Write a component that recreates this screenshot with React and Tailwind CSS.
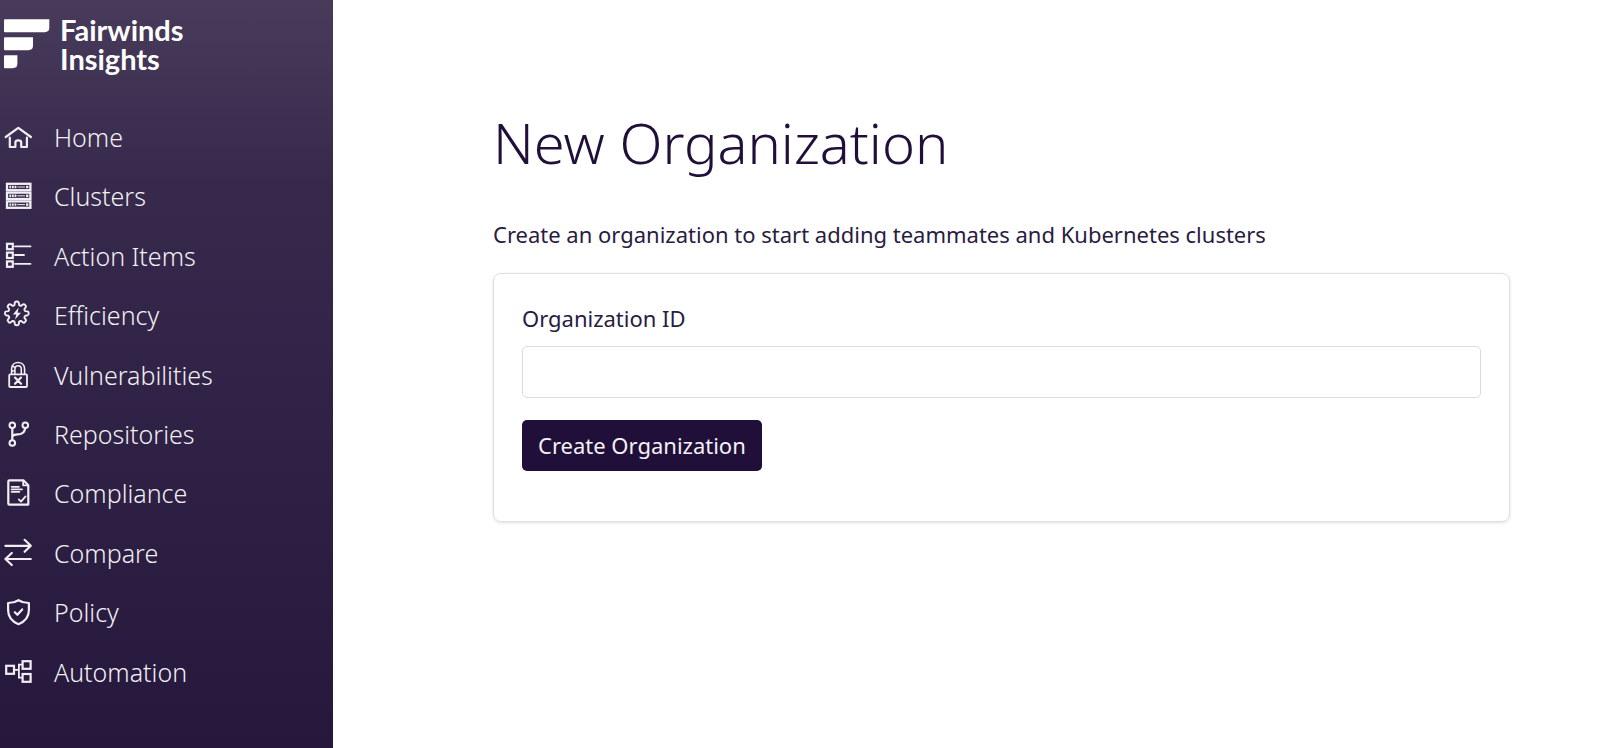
import React from "react";

const stroke = {
  fill: "none",
  stroke: "currentColor",
  strokeWidth: 2.2,
  strokeLinecap: "round",
  strokeLinejoin: "round",
};

function Icon({ children }) {
  return (
    <svg
      viewBox="0 0 28 28"
      className="h-7 w-7 shrink-0 overflow-visible"
      aria-hidden="true"
      {...stroke}
    >
      {children}
    </svg>
  );
}

function HomeIcon() {
  return (
    <Icon>
      <path d="M1.7 13 L14.3 3.8 L26.9 13" />
      <path d="M5.8 13.5 V23 H11.4 V18.4 Q11.4 16.4 14.3 16.4 Q17.2 16.4 17.2 18.4 V23 H22.9 V13.5" />
    </Icon>
  );
}

function ClustersIcon() {
  return (
    <Icon>
      {[1, 9.8, 18.6].map((y) => (
        <g key={y} strokeLinecap="butt" strokeLinejoin="miter">
          <rect x="3" y={y - 0.2} width="23.4" height="6.4" strokeWidth="2.3" />
          <path d={`M5.4 ${y + 3}h1.8m0.8 0h1.8m0.8 0h1.8`} strokeWidth="2.4" />
          <path d={`M13.4 ${y + 3}h7.6`} strokeWidth="1" />
          <path d={`M22 ${y + 3}h2.4`} strokeWidth="2.4" />
        </g>
      ))}
    </Icon>
  );
}

function ActionItemsIcon() {
  return (
    <Icon>
      <g strokeLinejoin="miter">
        <rect x="3" y="1.8" width="5.8" height="5.4" />
        <rect x="3" y="10.6" width="5.8" height="5.4" />
        <rect x="3" y="19.4" width="5.8" height="5.4" />
      </g>
      <path d="M11 4.4h15.5M11 13h9M11 21.8h15.5" strokeWidth="1.8" />
    </Icon>
  );
}

/* Outline of a cog with eight rounded teeth, centred on (cx, cy). */
function cogPath(cx, cy, inner, outer) {
  const at = (deg, r) => {
    const a = (deg * Math.PI) / 180;
    return `${(cx + r * Math.cos(a)).toFixed(2)} ${(cy + r * Math.sin(a)).toFixed(2)}`;
  };
  let d = `M${at(-15, inner)}`;
  for (let i = 0; i < 8; i += 1) {
    const a = i * 45;
    d += ` L${at(a - 11, outer - 1.2)} Q${at(a - 9, outer + 0.2)} ${at(a, outer)}`;
    d += ` Q${at(a + 9, outer + 0.2)} ${at(a + 11, outer - 1.2)} L${at(a + 15, inner)}`;
    d += ` Q${at(a + 22.5, inner - 0.8)} ${at(a + 30, inner)}`;
  }
  return `${d} Z`;
}

const cog = cogPath(12.8, 11.4, 8.8, 11.9);

function EfficiencyIcon() {
  return (
    <Icon>
      <path d={cog} strokeWidth="1.9" />
      <path
        d="M14.6 5.6 L9 12.4 H12.3 L11 17.6 L17 10.7 H13.6 Z"
        fill="currentColor"
        stroke="none"
      />
    </Icon>
  );
}

function VulnerabilitiesIcon() {
  return (
    <Icon>
      <rect x="5.2" y="13.4" width="17.8" height="12.6" rx="1" strokeWidth="1.8" />
      <path
        strokeWidth="1.6"
        d="M7.6 13 V8 C7.6 -0.6 20.6 -0.6 20.6 8 V13 M10.9 13 V8.2 C10.9 3.6 17.3 3.6 17.3 8.2 V13 M7.8 10 H10.8 M8.6 5 L11.4 6.6"
      />
      <path d="M11 16.6 L17 22.8 M17 16.6 L11 22.8" />
    </Icon>
  );
}

function RepositoriesIcon() {
  return (
    <Icon>
      <circle cx="8.3" cy="4.2" r="2.8" strokeWidth="2" />
      <circle cx="21.3" cy="4.2" r="2.8" strokeWidth="2" />
      <circle cx="8.3" cy="22" r="2.8" strokeWidth="2" />
      <path d="M8.3 7.2 V19 M8.3 15.6 C10 12.8 13 13.8 16.6 13 C19.6 12.2 20.8 10 21.2 7.2" />
    </Icon>
  );
}

function ComplianceIcon() {
  return (
    <Icon>
      <path d="M5.4 0.3 H19.4 L24.3 5.2 V24.6 H5.4 Q4.3 24.6 4.3 23.5 V1.4 Q4.3 0.3 5.4 0.3 Z" />
      <path d="M19.2 0.6 V5.4 H24" strokeWidth="1.8" />
      <path d="M7.6 6.8 H15 M7.6 9.4 H18 M7.6 11.8 H15.4" strokeWidth="1.7" />
      <path d="M14.8 19.4 L17 21.6 L21.6 16.4" strokeWidth="1.8" />
    </Icon>
  );
}

function CompareIcon() {
  return (
    <Icon>
      <path d="M1.4 6.8 H26.4 M20.6 0.8 L26.8 6.8 L20.6 12.8" />
      <path d="M26.8 20 H1.8 M7.8 14 L1.4 20 L7.8 26" />
    </Icon>
  );
}

function PolicyIcon() {
  return (
    <Icon>
      <path d="M14.5 1.2 Q18.6 3.8 24.9 4 V11 C24.9 17.8 20.8 22.6 14.5 25.2 C8.2 22.6 4.1 17.8 4.1 11 V4 Q10.4 3.8 14.5 1.2 Z" />
      <path d="M10.8 13.2 L13.4 15.8 L18.2 10.4" />
    </Icon>
  );
}

function AutomationIcon() {
  return (
    <Icon>
      <g strokeLinejoin="miter">
        <rect x="2.2" y="7.8" width="7.8" height="8" />
        <rect x="18.6" y="3.2" width="8" height="7.6" />
        <rect x="18.6" y="16" width="8" height="7.8" />
        <path d="M10.4 11.8 H14.8 M18 6.6 H14.9 V19.6 H18" strokeWidth="1.8" />
      </g>
    </Icon>
  );
}

const navItems = [
  ["Home", HomeIcon],
  ["Clusters", ClustersIcon],
  ["Action Items", ActionItemsIcon],
  ["Efficiency", EfficiencyIcon],
  ["Vulnerabilities", VulnerabilitiesIcon],
  ["Repositories", RepositoriesIcon],
  ["Compliance", ComplianceIcon],
  ["Compare", CompareIcon],
  ["Policy", PolicyIcon],
  ["Automation", AutomationIcon],
];

function Logo() {
  return (
    <a href="#" className="flex items-center gap-2.5 pl-1 text-white">
      <svg viewBox="0 0 46 50" className="h-[50px] w-[46px]" fill="currentColor" aria-hidden="true">
        <path d="M1 0.3 H45.3 V8.6 Q45.3 13.2 40.7 13.2 H1 Q0 13.2 0 12.2 V1.3 Q0 0.3 1 0.3 Z" />
        <path d="M1 18.3 H29 V26.6 Q29 31.2 24.4 31.2 H1 Q0 31.2 0 30.2 V19.3 Q0 18.3 1 18.3 Z" />
        <path d="M1 36.3 H13.4 V44.6 Q13.4 49.2 8.8 49.2 H1 Q0 49.2 0 48.2 V37.3 Q0 36.3 1 36.3 Z" />
      </svg>
      <span className="font-['Lato',sans-serif] text-[29px] leading-[29px] font-bold">
        Fairwinds
        <br />
        Insights
      </span>
    </a>
  );
}

export default function App() {
  return (
    <div className="flex min-h-screen bg-white font-['Noto_Sans',sans-serif] text-[#200f38]">
      <aside className="flex w-[333px] shrink-0 flex-col bg-linear-to-b from-[#483b5a] via-[#36294c] via-25% to-[#26183c] pt-[15px] pb-[46px]">
        <Logo />
        <nav className="mt-[35px] flex flex-1 flex-col">
          <ul className="grid flex-1 auto-rows-fr">
            {navItems.map(([label, Glyph]) => (
              <li key={label} className="flex">
                <a
                  href="#"
                  className="flex flex-1 items-center gap-[22px] pl-1 text-[25px] font-light text-[#f1eff3]"
                >
                  <Glyph />
                  {label}
                </a>
              </li>
            ))}
          </ul>
        </nav>
      </aside>

      <main className="min-w-0 flex-1 pt-[110px] pr-[90px] pb-12 pl-[160px]">
        <h1 className="text-[56px] leading-[64px] font-light">New Organization</h1>
        <p className="mt-[46px] text-[22px] leading-7 text-[#2a1b42]">
          Create an organization to start adding teammates and Kubernetes clusters
        </p>
        <form
          className="mt-[25px] rounded-lg border border-[#dedee0] px-7 pt-7 pb-[50px] shadow-[0_1px_3px_rgba(0,0,0,0.12)]"
          onSubmit={(event) => event.preventDefault()}
        >
          <label htmlFor="organization-id" className="block text-[22px] leading-8 text-[#2a1b42]">
            Organization ID
          </label>
          <input
            id="organization-id"
            type="text"
            className="mt-3 block h-[52px] w-full rounded-[5px] border border-[#dcdcde] px-3 text-[22px] outline-none"
          />
          <button
            type="submit"
            className="mt-[22px] block h-[51px] rounded-[5px] bg-[#200f38] px-4 text-[22px] text-[#f4f2f6]"
          >
            Create Organization
          </button>
        </form>
      </main>
    </div>
  );
}
